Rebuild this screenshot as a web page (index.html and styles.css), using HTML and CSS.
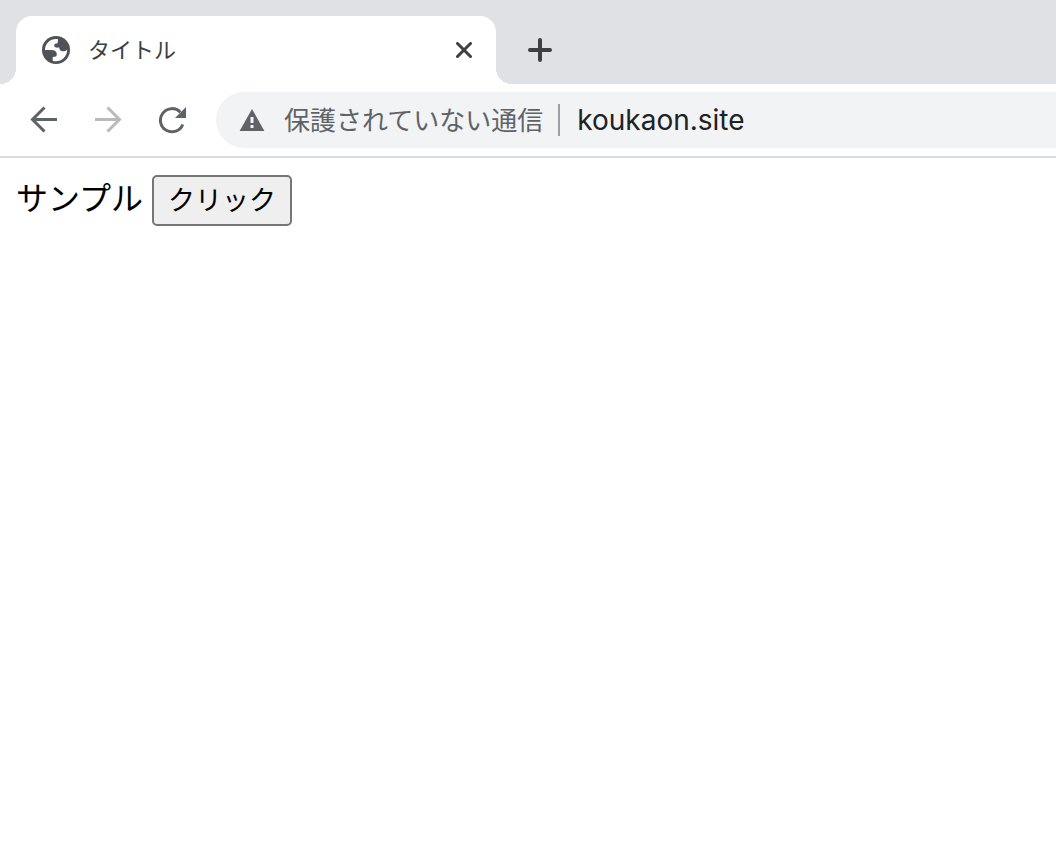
FILE: index.html
```html
<!DOCTYPE html>
<html lang="ja">
<head>
  <meta charset="UTF-8">
  <meta name="viewport" content="width=device-width, initial-scale=1.0">
  <title>タイトル</title>
  <link rel="stylesheet" href="styles.css">
</head>
<body>
  <header class="browser">
    <div class="tab-strip">
      <div class="tab">
        <svg class="favicon" viewBox="0 0 28 28" aria-hidden="true">
          <circle cx="14" cy="14" r="14" fill="#505259"/>
          <path d="M16 3.2C8.8 2.2 3 7.4 3 14H9.5C13 14 14.8 15.6 14.8 18.6C14.8 20.4 13.6 21 10.7 21V24.7C17.7 26.9 25.2 21.6 25.2 13.4C24 15 22.5 15.2 20.8 15.2C18.4 15.2 17.4 14 17.2 11.6C15.4 11.8 12.4 12 12.2 9.8C12 7.6 14 7.4 15.6 7.2Z" fill="#fff"/>
        </svg>
        <span class="tab-title">タイトル</span>
        <button class="tab-close" type="button" aria-label="タブを閉じる">
          <svg width="16" height="16" viewBox="0 0 16 16"><path d="M1.5 1.5L14.5 14.5M14.5 1.5L1.5 14.5"/></svg>
        </button>
      </div>
      <button class="new-tab" type="button" aria-label="新しいタブ">
        <svg width="24" height="24" viewBox="0 0 24 24"><path d="M12 2V22M2 12H22"/></svg>
      </button>
    </div>

    <div class="toolbar">
      <button class="nav-button" type="button" aria-label="戻る">
        <svg width="28" height="28" viewBox="0 0 28 28"><path d="M27 13.5H3M14.5 1.5L2.5 13.5L14.5 25.5"/></svg>
      </button>
      <button class="nav-button" type="button" aria-label="進む" disabled>
        <svg width="28" height="28" viewBox="0 0 28 28"><path d="M1 13.5H25M13.5 1.5L25.5 13.5L13.5 25.5"/></svg>
      </button>
      <button class="nav-button" type="button" aria-label="再読み込み">
        <svg width="28" height="28" viewBox="0 0 28 28">
          <path d="M24.8 18.5A11.6 11.6 0 1 1 22.4 6.2"/>
          <path class="arrow-head" d="M28 1V12H17Z"/>
        </svg>
      </button>
      <div class="address-bar">
        <svg class="warning" width="26" height="22" viewBox="0 0 26 22" aria-hidden="true">
          <path d="M13 0L25.4 22H0.6Z" fill="#5f6368"/>
          <path d="M11.5 8H14.5V14H11.5ZM11.5 16H14.5V19H11.5Z" fill="#f1f3f4"/>
        </svg>
        <span class="security">保護されていない通信</span>
        <input class="url" type="text" value="koukaon.site" aria-label="アドレス">
      </div>
    </div>
  </header>

  <main class="page">
    <span>サンプル</span>
    <button class="click-button" type="button">クリック</button>
  </main>
</body>
</html>
```

FILE: styles.css
```css
* {
  box-sizing: border-box;
}
body {
  margin: 0;
  background-color: #fff;
  color: #000;
  font-family: "Noto Sans CJK JP", sans-serif;
}
button {
  font-family: inherit;
}
svg {
  display: block;
  flex: none;
}

/* タブ */
.tab-strip {
  display: flex;
  align-items: flex-end;
  height: 84px;
  padding-left: 16px;
  background-color: #dfe1e5;
}
.tab {
  position: relative;
  display: flex;
  align-items: center;
  width: 480px;
  height: 68px;
  padding: 0 20px 0 26px;
  border-radius: 16px 16px 0 0;
  background-color: #fff;
}
.tab::before,
.tab::after {
  content: "";
  position: absolute;
  bottom: 0;
  width: 16px;
  height: 16px;
}
.tab::before {
  right: 100%;
  background: radial-gradient(circle at 0 0, transparent 16px, #fff 16px);
}
.tab::after {
  left: 100%;
  background: radial-gradient(circle at 100% 0, transparent 16px, #fff 16px);
}
.favicon {
  width: 28px;
  height: 28px;
}
.tab-title {
  flex: 1;
  margin-left: 18px;
  padding-bottom: 4px;
  font-size: 22px;
  line-height: 32px;
  color: #3c4043;
}
.tab-close,
.new-tab,
.nav-button {
  display: flex;
  align-items: center;
  justify-content: center;
  flex: none;
  padding: 0;
  border: none;
  background: none;
  fill: none;
  stroke: #3c4043;
  stroke-linecap: round;
}
.tab-close {
  width: 24px;
  height: 24px;
  stroke-width: 3px;
}
.new-tab {
  width: 56px;
  height: 68px;
  margin-left: 16px;
  stroke-width: 4px;
}

/* ツールバー */
.toolbar {
  display: flex;
  align-items: center;
  height: 74px;
  padding-left: 12px;
  border-bottom: 2px solid #dadce0;
}
.nav-button {
  width: 64px;
  height: 56px;
  stroke: #5f6368;
  stroke-width: 3px;
  stroke-linecap: butt;
}
.nav-button:disabled {
  stroke: #bababc;
}
.arrow-head {
  fill: #5f6368;
  stroke: none;
}
.address-bar {
  display: flex;
  align-items: center;
  flex: 1;
  height: 56px;
  margin-left: 12px;
  padding-left: 23px;
  border-radius: 28px 0 0 28px;
  background-color: #f1f3f4;
}
.security {
  margin: 0 15px 0 19px;
  padding-bottom: 2px;
  font-size: 26px;
  line-height: 36px;
  white-space: nowrap;
  color: #5f6368;
}
.url {
  flex: 1;
  min-width: 0;
  height: 32px;
  padding: 0 0 0 17px;
  border: none;
  border-left: 2px solid #9aa0a6;
  background: none;
  font-family: Inter, sans-serif;
  font-size: 28px;
  color: #202124;
}

/* ページ本文 */
.page {
  display: flex;
  align-items: flex-start;
  gap: 9px;
  padding: 17px 16px;
  font-size: 32px;
  line-height: 42px;
}
.click-button {
  padding: 0 14px 4px;
  border: 2px solid #767676;
  border-radius: 5px;
  background-color: #efefef;
  font-size: 27px;
  line-height: 43px;
  color: #000;
}
```
